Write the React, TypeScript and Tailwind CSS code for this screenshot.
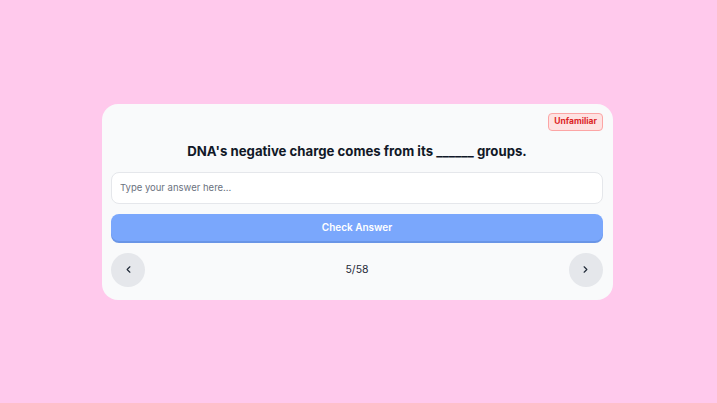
import { ChevronLeft, ChevronRight } from "lucide-react";

export default function App() {
  return (
    <div
      className="min-h-screen w-full bg-[#ffc9ec] flex items-center justify-center"
      style={{ fontFamily: "Inter, 'Noto Sans', sans-serif" }}
    >
      <div className="w-[511px] mr-[2px] bg-[#f9fafb] rounded-2xl pl-[9px] pr-[10px] pt-[9px] pb-[13px] flex flex-col">
        <div className="flex justify-end">
          <span className="h-[18px] flex items-center text-[8.5px] font-bold text-[#dc2626] bg-[#fee2e2] border border-[#fca5a5] rounded px-[5px]">
            Unfamiliar
          </span>
        </div>
        <h2 className="mt-[10px] text-center text-[13.2px] leading-5 font-bold text-[#111827]">
          DNA's negative charge comes from its ______ groups.
        </h2>
        <input
          type="text"
          placeholder="Type your answer here..."
          className="mt-[11px] h-[32px] w-full bg-white border border-[#e5e7eb] rounded-lg px-2 text-[9.5px] text-gray-800 placeholder:text-[#6b7280] outline-none"
        />
        <button className="mt-[10px] h-[27px] w-full rounded-lg bg-[#7aa7fc] shadow-[0_2px_0_#6a95e6] text-white text-[10px] font-semibold">
          Check Answer
        </button>
        <div className="mt-[12px] flex items-center justify-between">
          <button className="w-[34px] h-[34px] rounded-full bg-[#e5e7eb] flex items-center justify-center text-[#1f2937]">
            <ChevronLeft size={11} strokeWidth={2.5} />
          </button>
          <span className="text-[10.5px] text-[#1f2937]">5/58</span>
          <button className="w-[34px] h-[34px] rounded-full bg-[#e5e7eb] flex items-center justify-center text-[#1f2937]">
            <ChevronRight size={11} strokeWidth={2.5} />
          </button>
        </div>
      </div>
    </div>
  );
}
